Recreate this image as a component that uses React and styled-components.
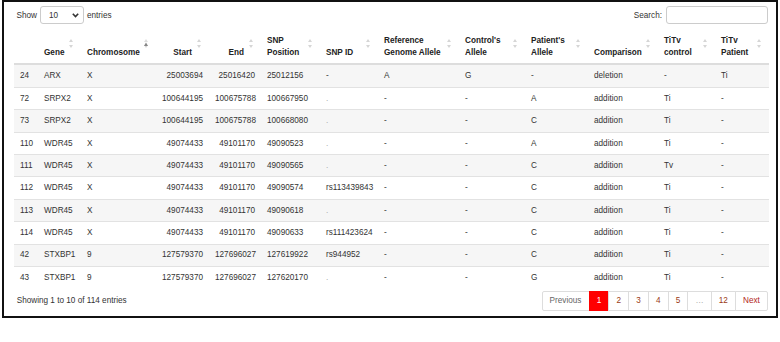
import React from 'react';
import styled, { createGlobalStyle } from 'styled-components';

const Global = createGlobalStyle`
  html, body { margin: 0; padding: 0; background: #fff; }
  body {
    font-family: "Liberation Sans", Arial, sans-serif;
    font-size: 8.2px;
    color: #333;
  }
`;

const Frame = styled.div`
  box-sizing: border-box;
  width: 776px;
  height: 318px;
  margin-left: 2px;
  border: 2px solid #111;
  padding: 2px 7px 0 10px;
  display: flex;
  flex-direction: column;
`;

const TopBar = styled.div`
  display: flex;
  justify-content: space-between;
  align-items: center;
  height: 18px;
  margin-top: 2px;
  padding-left: 2.5px;
`;

const Field = styled.div`
  display: flex;
  align-items: center;
  gap: ${p => p.$gap || 3}px;
`;

const Select = styled.div`
  box-sizing: border-box;
  width: 44px;
  height: 18px;
  border: 1px solid #ccc;
  border-radius: 3px;
  padding: 0 4px 0 8px;
  display: flex;
  align-items: center;
  justify-content: space-between;
  background: #fff;
`;

const SearchBox = styled.div`
  box-sizing: border-box;
  width: 102px;
  height: 18px;
  border: 1px solid #ccc;
  border-radius: 3px;
  margin-right: 1px;
`;

const Table = styled.table`
  width: 755px;
  table-layout: fixed;
  border-collapse: collapse;
  margin-top: 6.9px;
`;

const Th = styled.th`
  position: relative;
  padding: 4.6px ${p => (p.$right ? 17 : 13)}px 4.6px 6px;
  text-align: ${p => (p.$right ? 'right' : 'left')};
  vertical-align: bottom;
  font-weight: bold;
  line-height: 11.7px;
  color: #222;
  border-bottom: 2px solid #ddd;
  &:first-child { padding-right: 6px; }
`;

const SortMark = styled.svg`
  position: absolute;
  top: 8px;
  right: 8px;
`;

const Row = styled.tr`
  &:nth-child(odd) { background: #f6f6f6; }
  & + & > td { border-top: 1px solid #e2e2e2; }
`;

const Td = styled.td`
  height: 21.4px;
  padding: 0 6px;
  line-height: 11.7px;
  text-align: ${p => (p.$right ? 'right' : 'left')};
  color: ${p => (p.$faint ? '#aaa' : '#333')};
  white-space: nowrap;
  overflow: hidden;
`;

const Footer = styled.div`
  display: flex;
  justify-content: space-between;
  align-items: center;
  margin-top: 2.5px;
  padding-left: 2.7px;
`;

const Pager = styled.ul`
  display: flex;
  list-style: none;
  margin: 0 1px 0 0;
  padding: 0;
`;

const PageItem = styled.li`
  box-sizing: border-box;
  height: 20px;
  padding: 0 7.1px;
  display: flex;
  align-items: center;
  border: 1px solid ${p => (p.$active ? '#f00' : '#ddd')};
  margin-left: -1px;
  background: ${p => (p.$active ? '#f00' : '#fff')};
  color: ${p => p.$color || '#9a3a14'};
  &:first-child { border-radius: 2px 0 0 2px; margin-left: 0; }
  &:last-child { border-radius: 0 2px 2px 0; }
`;

const columns = [
  { w: 24, label: '' },
  { w: 43, label: 'Gene' },
  { w: 75, label: 'Chromosome', sorted: true },
  { w: 53, label: 'Start', right: true },
  { w: 52, label: 'End', right: true },
  { w: 59, label: 'SNP Position' },
  { w: 58, label: 'SNP ID' },
  { w: 81, label: 'Reference Genome Allele' },
  { w: 66, label: "Control's Allele" },
  { w: 63, label: "Patient's Allele" },
  { w: 70, label: 'Comparison' },
  { w: 57, label: 'TiTv control' },
  { w: 54, label: 'TiTv Patient' },
];

const rows = [
  ['24', 'ARX', 'X', '25003694', '25016420', '25012156', '-', 'A', 'G', '-', 'deletion', '-', 'Ti'],
  ['72', 'SRPX2', 'X', '100644195', '100675788', '100667950', '.', '-', '-', 'A', 'addition', 'Ti', '-'],
  ['73', 'SRPX2', 'X', '100644195', '100675788', '100668080', '.', '-', '-', 'C', 'addition', 'Ti', '-'],
  ['110', 'WDR45', 'X', '49074433', '49101170', '49090523', '.', '-', '-', 'A', 'addition', 'Ti', '-'],
  ['111', 'WDR45', 'X', '49074433', '49101170', '49090565', '.', '-', '-', 'C', 'addition', 'Tv', '-'],
  ['112', 'WDR45', 'X', '49074433', '49101170', '49090574', 'rs113439843', '-', '-', 'C', 'addition', 'Ti', '-'],
  ['113', 'WDR45', 'X', '49074433', '49101170', '49090618', '.', '-', '-', 'C', 'addition', 'Ti', '-'],
  ['114', 'WDR45', 'X', '49074433', '49101170', '49090633', 'rs111423624', '-', '-', 'C', 'addition', 'Ti', '-'],
  ['42', 'STXBP1', '9', '127579370', '127696027', '127619922', 'rs944952', '-', '-', 'C', 'addition', 'Ti', '-'],
  ['43', 'STXBP1', '9', '127579370', '127696027', '127620170', '.', '-', '-', 'G', 'addition', 'Ti', '-'],
];

const pages = [
  { label: 'Previous', color: '#666' },
  { label: '1', active: true, color: '#fff' },
  { label: '2' },
  { label: '3' },
  { label: '4' },
  { label: '5' },
  { label: '…', color: '#aaa' },
  { label: '12' },
  { label: 'Next', color: '#b3261a' },
];

// petite icone de tri (datatables)
const Sort = ({ sorted }) => (
  <SortMark width="4" height="9" viewBox="0 0 4 9">
    <path d="M2 0 L4 3 L0 3 Z" fill={sorted ? '#ddd' : '#d6d6d6'} />
    <path d="M2 9 L4 6 L0 6 Z" fill="#d6d6d6" />
    {sorted && <path d="M2 3.5 L4 7 L0 7 Z" fill="#888" />}
  </SortMark>
);

const Chevron = () => (
  <svg width="7" height="5" viewBox="0 0 7 5">
    <path d="M0.8 0.8 L3.5 3.6 L6.2 0.8" fill="none" stroke="#333" strokeWidth="1.6" />
  </svg>
);

const App = () => (
  <>
    <Global />
    <Frame>
      <TopBar>
        <Field>
          <span>Show</span>
          <Select>
            <span>10</span>
            <Chevron />
          </Select>
          <span>entries</span>
        </Field>
        <Field $gap={4}>
          <span>Search:</span>
          <SearchBox />
        </Field>
      </TopBar>

      <Table>
        <colgroup>
          {columns.map((c, i) => <col key={i} style={{ width: c.w }} />)}
        </colgroup>
        <thead>
          <tr>
            {columns.map((c, i) => (
              <Th key={i} $right={c.right}>
                {c.label}
                {i > 0 && <Sort sorted={c.sorted} />}
              </Th>
            ))}
          </tr>
        </thead>
        <tbody>
          {rows.map((r, i) => (
            <Row key={i}>
              {r.map((v, j) => (
                <Td key={j} $right={columns[j].right} $faint={v === '.'}>{v}</Td>
              ))}
            </Row>
          ))}
        </tbody>
      </Table>

      <Footer>
        <span>Showing 1 to 10 of 114 entries</span>
        <Pager>
          {pages.map(p => (
            <PageItem key={p.label} $active={p.active} $color={p.color}>{p.label}</PageItem>
          ))}
        </Pager>
      </Footer>
    </Frame>
  </>
);

export default App;
